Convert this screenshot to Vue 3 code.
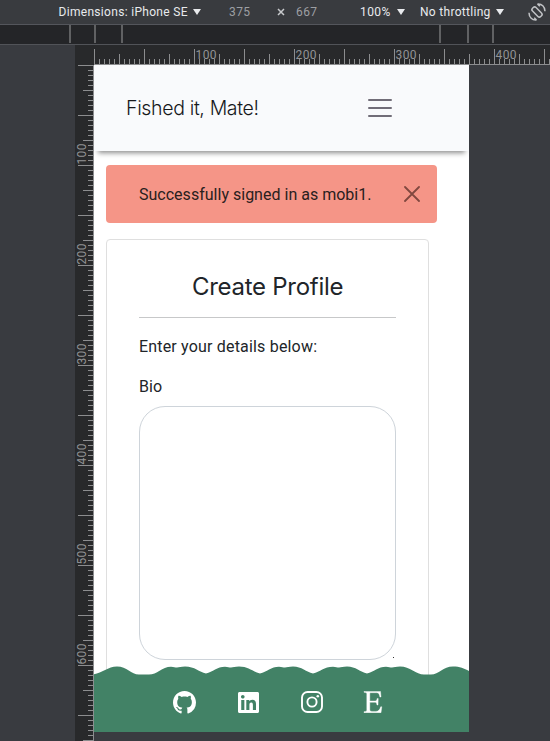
<script setup>
const topTicks = Array.from({ length: 92 }, (_, i) => ({
  p: i * 5 + 19.5,
  len: i % 10 === 0 ? 15 : i % 5 === 0 ? 10 : 5,
}))
const sideTicks = Array.from({ length: 136 }, (_, i) => ({
  p: i * 5 + 0.5,
  len: i % 10 === 0 ? 15 : i % 5 === 0 ? 10 : 5,
}))
const topLabels = [100, 200, 300, 400]
const sideLabels = [100, 200, 300, 400, 500, 600]
const mediaMarks = [69, 94, 121, 439, 467, 492]
</script>

<template>
  <div class="devtools">
    <div class="toolbar">
      <span class="dims">Dimensions: iPhone SE</span>
      <i class="caret"></i>
      <span class="num width">375</span>
      <svg class="times" viewBox="0 0 8 8"><path d="M1 1L7 7M7 1L1 7" /></svg>
      <span class="num height">667</span>
      <span class="zoom">100%</span>
      <i class="caret"></i>
      <span class="throttle">No throttling</span>
      <i class="caret"></i>
      <svg class="rotate" viewBox="0 0 20 20">
        <rect x="7.500" y="4.200" width="5" height="11.600" rx="2" transform="rotate(-45 10 10)" />
        <path d="M10.500 2C14.700 1.600 18 4.500 18 9.300M9.500 18C5.300 18.400 2 15.500 2 10.700M10.500 2L12.800 4.200M9.500 18L7.200 15.800" />
      </svg>
    </div>

    <svg class="media" viewBox="0 0 550 19">
      <rect v-for="m in mediaMarks" :key="m" :x="m" y="0" width="2" height="18" />
    </svg>

    <div class="stage">
      <svg class="ruler-top" viewBox="0 0 475 20">
        <path v-for="t in topTicks" :key="t.p" :d="`M${t.p} ${19 - t.len}V19`" />
        <path d="M19 19.5H475" />
        <text v-for="l in topLabels" :key="l" :x="l + 20.5" y="14" textLength="21">{{ l }}</text>
      </svg>
      <div class="row">
        <svg class="ruler-side" viewBox="0 0 19 676">
          <path v-for="t in sideTicks" :key="t.p" :d="`M${18 - t.len} ${t.p}H18`" />
          <path d="M18.5 0V676" />
          <text
            v-for="l in sideLabels"
            :key="l"
            :transform="`translate(11 ${l - 0.5}) rotate(-90)`"
            textLength="21"
          >{{ l }}</text>
        </svg>

        <div class="page">
          <header class="nav">
            <svg class="brand" viewBox="0 0 140 30">
              <text x="0" y="22" textLength="133">Fished it, Mate!</text>
            </svg>
            <svg class="burger" viewBox="0 0 24 20">
              <path d="M1 2H23M1 10H23M1 18H23" />
            </svg>
          </header>

          <main class="content">
            <div class="alert">
              <svg class="alert-text" viewBox="0 0 240 24">
                <text x="0" y="18" textLength="232.5">Successfully signed in as mobi1.</text>
              </svg>
              <svg class="close" viewBox="0 0 16 16"><path d="M1 1L15 15M15 1L1 15" /></svg>
            </div>

            <section class="card">
              <h1 class="title">
                <svg viewBox="0 0 152 34"><text x="0" y="25" textLength="151.5">Create Profile</text></svg>
              </h1>
              <svg class="line-text intro" viewBox="0 0 257 24">
                <text x="0" y="17" textLength="178">Enter your details below:</text>
              </svg>
              <svg class="line-text bio" viewBox="0 0 257 24">
                <text x="0" y="17" textLength="23">Bio</text>
              </svg>
              <div class="textarea"><i class="grip"></i></div>
            </section>
          </main>

          <footer class="footer">
            <svg class="wave" viewBox="0 0 375 10">
              <path
                d="M0 10V9.300C8 8 14 1.500 23 1.500C33 1.500 37 9.600 45 9.600H55C63 9.600 68 1.700 77 1.700C80 1.700 81 2.500 83 2.500C85 2.500 87 1.500 91 1.500C101 1.500 105 7 112 8.500C119 7 123 1.700 131 1.700C134 1.700 135 2.500 137 2.500C139 2.500 141 1.500 145 1.500C155 1.500 159 7 166 8.500C173 7 177 1.700 185 1.700C188 1.700 189 2.500 191 2.500C193 2.500 195 1.500 199 1.500C208 1.500 212 7 219 8.500C226 7 230 1.700 239 1.700C242 1.700 243 2.500 245 2.500C247 2.500 249 1.500 253 1.500C262 1.500 266 7 273 8.500C280 7 284 1.700 292 1.700C295 1.700 296 2.500 298 2.500C300 2.500 302 1.500 306 1.500C316 1.500 322 9.600 330 9.600H337C345 9.600 349 1.500 359 1.500C366 1.500 370 3.500 375 6V10Z"
              />
            </svg>
            <div class="social">
              <svg class="github" viewBox="0 0 16 16">
                <path
                  d="M8 0C3.58 0 0 3.58 0 8c0 3.54 2.29 6.53 5.47 7.59.4.07.55-.17.55-.38 0-.19-.01-.82-.01-1.49-2.01.37-2.53-.49-2.69-.94-.09-.23-.48-.94-.82-1.13-.28-.15-.68-.52-.01-.53.63-.01 1.08.58 1.23.82.72 1.21 1.87.87 2.33.66.07-.52.28-.87.51-1.07-1.78-.2-3.64-.89-3.64-3.95 0-.87.31-1.59.82-2.15-.08-.2-.36-1.02.08-2.12 0 0 .67-.21 2.2.82.64-.18 1.32-.27 2-.27s1.36.09 2 .27c1.53-1.04 2.2-.82 2.2-.82.44 1.1.16 1.92.08 2.12.51.56.82 1.27.82 2.15 0 3.07-1.87 3.75-3.65 3.95.29.25.54.73.54 1.48 0 1.07-.01 1.93-.01 2.2 0 .21.15.46.55.38A8.01 8.01 0 0 0 16 8c0-4.42-3.58-8-8-8z"
                />
              </svg>
              <svg class="linkedin" viewBox="0 0 448 448">
                <path
                  d="M416 0H31.900C14.300 0 0 14.500 0 32.300v383.400C0 433.500 14.300 448 31.900 448H416c17.600 0 32-14.500 32-32.300V32.300C448 14.500 433.600 0 416 0zM135.400 384H69V170.200h66.500V384zM102.200 141c-21.300 0-38.500-17.300-38.500-38.500S80.900 64 102.200 64c21.200 0 38.500 17.300 38.500 38.500 0 21.300-17.200 38.500-38.500 38.500zM384.300 384h-66.400V280c0-24.800-.5-56.700-34.500-56.700-34.600 0-39.900 27-39.900 54.900V384h-66.400V170.200h63.700v29.200h.9c8.900-16.800 30.600-34.500 62.900-34.500 67.200 0 79.700 44.300 79.700 101.900z"
                />
              </svg>
              <svg class="instagram" viewBox="0 0 22 22">
                <rect x="1" y="1" width="20" height="20" rx="5.6" />
                <circle class="lens" cx="11" cy="11" r="4.6" />
                <circle class="dot" cx="16.800" cy="5.300" r="1.300" />
              </svg>
              <svg class="etsy" viewBox="0 0 20 22">
                <path
                  d="M1 .4H17.500L18 6H16.900C16.200 2.500 15.700 1.700 13 1.700H7.700C7 1.700 6.800 2 6.800 2.600V10H11.500C13.400 10 13.700 9.400 14.200 7.400H15.200L15 14H14C13.600 11.800 13.300 11.300 11.400 11.300H6.800V18.500C6.800 19.900 7.500 20.400 9 20.400H13C15.700 20.400 16.700 18.600 17.700 15.800H18.800L18 21.700H1V20.700L2.500 20.400C3.500 20.200 3.800 19.900 3.800 18.800V3.200C3.800 2 3.500 1.800 2.500 1.600L1 1.300Z"
                />
              </svg>
            </div>
          </footer>
        </div>
      </div>
    </div>
  </div>
</template>

<style>
body {
  margin: 0;
  background: #393b3f;
}
</style>

<style scoped>
* {
  box-sizing: border-box;
}
svg {
  display: block;
  flex: none;
}
.devtools {
  width: 550px;
  height: 741px;
  overflow: hidden;
  background: #393b40;
  font-family: Roboto, "Liberation Sans", sans-serif;
}
.toolbar {
  display: flex;
  align-items: center;
  height: 25px;
  padding-left: 58px;
  border-bottom: 1px solid #54565c;
  background: #393b3f;
  color: #e8eaed;
  font-size: 12px;
  line-height: 24px;
  white-space: nowrap;
}
.dims {
  width: 135px;
  padding-left: 0.5px;
  letter-spacing: 0.31px;
}
.caret {
  flex: none;
  width: 8px;
  height: 6px;
  background: #e8eaed;
  clip-path: polygon(0 0, 100% 0, 50% 100%);
}
.num {
  color: #9d9fa3;
  letter-spacing: 0.4px;
}
.width {
  margin-left: 28px;
  width: 48px;
}
.times {
  width: 8px;
  height: 8px;
  fill: none;
  stroke: #c8cacd;
  stroke-width: 1.5;
}
.height {
  width: 64px;
  margin-left: 11px;
}
.zoom {
  width: 37px;
  letter-spacing: 0.4px;
}
.throttle {
  width: 76px;
  margin-left: 15px;
  letter-spacing: 0.3px;
}
.rotate {
  width: 20px;
  height: 20px;
  margin-left: 23px;
  fill: none;
  stroke: #c0c2c5;
  stroke-width: 1.5;
}
.media {
  width: 550px;
  height: 20px;
  border-bottom: 1px solid #515358;
  background: #242528;
  fill: #606163;
}
.stage {
  padding-left: 75px;
}
.ruler-top,
.ruler-side {
  background: #28292b;
  fill: none;
  stroke: #8c8d8f;
  stroke-width: 1;
}
.ruler-top {
  width: 475px;
  height: 20px;
}
.ruler-side {
  width: 19px;
  height: 676px;
}
.ruler-top text,
.ruler-side text {
  fill: #929395;
  stroke: none;
  font-size: 12px;
}
.row {
  display: flex;
  align-items: flex-start;
}
.page {
  display: flex;
  flex-direction: column;
  width: 375px;
  height: 667px;
  overflow: hidden;
  background: #fff;
  color: #212529;
}
.nav {
  display: flex;
  flex: none;
  align-items: center;
  justify-content: space-between;
  height: 86px;
  padding: 0 77px 0 32px;
  background: #f9fafc;
  box-shadow: 0 6px 5px -4px rgba(0, 0, 0, 0.45);
}
.brand {
  width: 140px;
  height: 30px;
  fill: #16181b;
  font-family: Inter, sans-serif;
  font-size: 19.5px;
  font-weight: 300;
}
.burger {
  width: 24px;
  height: 20px;
  fill: none;
  stroke: #716d78;
  stroke-width: 2;
  stroke-linecap: round;
}
.content {
  flex: 1;
  min-height: 0;
  padding: 14px 32px 0 12px;
}
.alert {
  display: flex;
  align-items: center;
  justify-content: space-between;
  height: 58px;
  padding: 0 17px 0 33px;
  border-radius: 4px;
  background: #f59587;
}
.alert-text {
  width: 240px;
  height: 24px;
  fill: #29201d;
  font-size: 16px;
}
.close {
  width: 16px;
  height: 16px;
  fill: none;
  stroke: #81483f;
  stroke-width: 1.8;
  stroke-linecap: round;
}
.card {
  width: 323px;
  height: 520px;
  margin-top: 16px;
  padding: 30px 32px;
  border: 1px solid #dfdfdf;
  border-radius: 4px;
}
.title {
  display: flex;
  justify-content: center;
  height: 48px;
  margin: 0;
  border-bottom: 1px solid #c7c8c9;
}
.title svg {
  width: 152px;
  height: 34px;
  fill: #212529;
  font-family: Inter, sans-serif;
  font-size: 24px;
  font-weight: 400;
}
.line-text {
  width: 257px;
  height: 24px;
  fill: #212529;
  font-size: 16px;
}
.intro {
  margin-top: 17px;
}
.bio {
  margin-top: 16px;
}
.textarea {
  display: flex;
  align-items: flex-end;
  justify-content: flex-end;
  width: 257px;
  height: 254px;
  margin-top: 7px;
  padding: 0 1px 1px 0;
  border: 1px solid #ced4da;
  border-radius: 26px;
}
.grip {
  width: 1px;
  height: 1px;
  background: #333;
}
.footer {
  position: relative;
  z-index: 1;
  flex: none;
}
.wave {
  width: 375px;
  height: 10px;
  fill: #428266;
}
.social {
  display: flex;
  align-items: center;
  height: 57px;
  padding: 0 0 3px 79px;
  background: #428266;
  fill: #fff;
}
.github {
  width: 23px;
  height: 23px;
}
.linkedin {
  width: 21px;
  height: 21px;
  margin-left: 42px;
}
.instagram {
  width: 22px;
  height: 22px;
  margin-left: 42px;
  fill: none;
  stroke: #fff;
  stroke-width: 1.9;
}
.dot {
  fill: #fff;
  stroke: none;
}
.etsy {
  width: 20px;
  height: 22px;
  margin-left: 40px;
  stroke: #fff;
  stroke-width: 0.4;
}
</style>
